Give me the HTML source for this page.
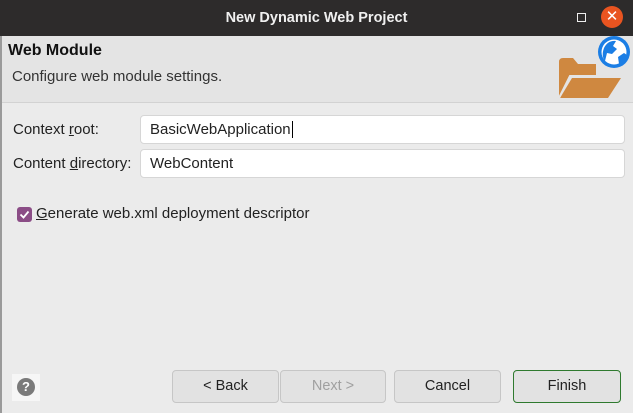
<!DOCTYPE html><html><head><style>
*{margin:0;padding:0;box-sizing:border-box}
body{width:633px;height:413px;background:#ebebeb;font-family:"Liberation Sans","DejaVu Sans",sans-serif;position:relative;overflow:hidden;color:#222}
.abs{position:absolute}
#title{left:0;top:0;width:633px;height:36px;background:#2d2b2b;color:#f0f0f0;font-weight:bold;font-size:14.5px;text-align:center;line-height:36px}
#hdr{left:2px;top:36px;width:631px;height:67px;background:#e4e4e4;border-bottom:1px solid #d2d2d2}
.inp{background:#fff;border:1px solid #d6d6d6;border-radius:4px;height:29px;left:140px;width:485px;font-size:15px;padding:5px 9px;line-height:17px}
.lbl{font-size:15px;left:13px}
.btn{top:370px;height:33px;width:107px;border:1px solid #c6c6c6;border-radius:4px;background:#e2e2e2;font-size:14.5px;text-align:center;line-height:31px}
</style></head><body>
<div class="abs" style="left:0;top:36px;width:2px;height:377px;background:#9a9a9a"></div>
<div id="title" class="abs">New Dynamic Web Project</div>
<div class="abs" style="left:577px;top:13px;width:9px;height:9px;border:1.3px solid #eee"></div>
<div class="abs" style="left:601px;top:6px;width:22px;height:22px;border-radius:50%;background:#e95420;color:#fff;font-size:15px;text-align:center;line-height:22px">✕</div>
<div id="hdr" class="abs"></div>
<div class="abs" style="left:8px;top:42px;font-weight:bold;font-size:16px;color:#111">Web Module</div>
<div class="abs" style="left:12px;top:68px;font-size:15px;color:#333">Configure web module settings.</div>
<svg class="abs" style="left:555px;top:36px" width="78" height="64" viewBox="0 0 78 64">
<path d="M4 26 q0-4 4-4 h10 l5 6 h18 v12 H4z" fill="#cf8840"/>
<path d="M4 38 v24 l10-22z" fill="#cf8840"/>
<path d="M5 62 L17 42 H66 L53 62z" fill="#cf8840"/>
<path d="M4 62 L15 40 H64" stroke="#e4e4e4" stroke-width="2" fill="none"/>
<circle cx="59" cy="16" r="16" fill="#1b7ee5"/>
<circle cx="59" cy="16" r="12.5" fill="#fff"/>
<path d="M49 12 q4-8 12-7 l-3 5 4 3 -5 5 -5 -1 -2 8 q-4-5 -1-13z M63 21 l6-4 3 2 q-2 7 -8 9z" fill="#1b7ee5"/>
</svg>
<div class="abs lbl" style="top:121px">Context <u>r</u>oot:</div>
<div class="abs inp" style="top:115px">BasicWebApplication<span style="border-left:1px solid #000;margin-left:1px"></span></div>
<div class="abs lbl" style="top:155px">Content <u>d</u>irectory:</div>
<div class="abs inp" style="top:149px">WebContent</div>
<div class="abs" style="left:17px;top:207px;width:15px;height:15px;border-radius:3px;background:#8b4d86"></div>
<svg class="abs" style="left:17px;top:207px" width="15" height="15"><path d="M3.5 7.5 l3 3 5-6" stroke="#fff" stroke-width="1.8" fill="none"/></svg>
<div class="abs" style="left:36px;top:205px;font-size:15px"><u>G</u>enerate web.xml deployment descriptor</div>
<div class="abs" style="left:12px;top:374px;width:28px;height:27px;background:#f6f6f6"></div>
<div class="abs" style="left:17px;top:378px;width:18px;height:18px;border-radius:50%;background:#7a7a7a;color:#fff;font-weight:bold;font-size:13px;text-align:center;line-height:18px">?</div>
<div class="abs btn" style="left:172px">&lt; Back</div>
<div class="abs btn" style="left:280px;color:#a0a0a0;width:106px">Next &gt;</div>
<div class="abs btn" style="left:394px">Cancel</div>
<div class="abs btn" style="left:513px;border-color:#2f7a2f;width:108px">Finish</div>
</body></html>
